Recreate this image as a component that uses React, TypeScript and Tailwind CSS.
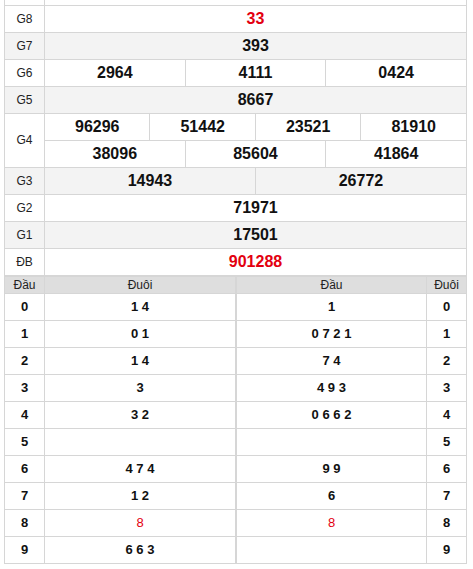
import React from "react";

const RED = "text-[#e3000f]";

type Prize = {
  label: string;
  rows: string[][];
  gray?: boolean;
  red?: boolean;
};

const prizes: Prize[] = [
  { label: "G8", rows: [["33"]], red: true },
  { label: "G7", rows: [["393"]], gray: true },
  { label: "G6", rows: [["2964", "4111", "0424"]] },
  { label: "G5", rows: [["8667"]], gray: true },
  { label: "G4", rows: [["96296", "51442", "23521", "81910"], ["38096", "85604", "41864"]] },
  { label: "G3", rows: [["14943", "26772"]], gray: true },
  { label: "G2", rows: [["71971"]] },
  { label: "G1", rows: [["17501"]], gray: true },
  { label: "ĐB", rows: [["901288"]], red: true },
];

const dau = ["1 4", "0 1", "1 4", "3", "3 2", "", "4 7 4", "1 2", "8", "6 6 3"];
const duoi = ["1", "0 7 2 1", "7 4", "4 9 3", "0 6 6 2", "", "9 9", "6", "8", ""];

const cell = "border border-[#d6d6d6] text-center p-0";

function Loto({ side }: { side: "left" | "right" }) {
  const values = side === "left" ? dau : duoi;
  const numCell = `${cell} w-[40px] h-[27px] text-[13px] font-bold text-[#111]`;
  return (
    <table className={`border-collapse table-fixed ${side === "left" ? "w-[232px]" : "w-[231px]"}`}>
      <thead>
        <tr className="bg-[#dedede] h-[17px] text-[12px] leading-[14px] text-[#222]">
          {side === "left" ? (
            <>
              <th className={`${cell} w-[40px] font-normal`}>Đầu</th>
              <th className={`${cell} font-normal`}>Đuôi</th>
            </>
          ) : (
            <>
              <th className={`${cell} font-normal`}>Đầu</th>
              <th className={`${cell} w-[40px] font-normal`}>Đuôi</th>
            </>
          )}
        </tr>
      </thead>
      <tbody>
        {values.map((v, i) => {
          const val = (
            <td className={`${cell} h-[27px] text-[13px] ${v === "8" ? `${RED} font-normal` : "font-bold text-[#111]"}`}>
              {v}
            </td>
          );
          return (
            <tr key={i} className="bg-white">
              {side === "left" ? (
                <>
                  <td className={numCell}>{i}</td>
                  {val}
                </>
              ) : (
                <>
                  {val}
                  <td className={numCell}>{i}</td>
                </>
              )}
            </tr>
          );
        })}
      </tbody>
    </table>
  );
}

export default function App() {
  return (
    <div className="w-[473px] h-[569px] overflow-hidden bg-white pl-[4px] font-['Liberation_Sans',Arial,sans-serif]">
      <table className="w-[463px] border-collapse table-fixed">
        <colgroup>
          <col className="w-[40px]" />
          {Array.from({ length: 12 }).map((_, i) => (
            <col key={i} />
          ))}
        </colgroup>
        <tbody>
          <tr className="h-[5px]">
            <td className={`${cell} border-t-0`} />
            <td className={`${cell} border-t-0`} colSpan={12} />
          </tr>
          {prizes.map((p) =>
            p.rows.map((nums, ri) => (
              <tr key={p.label + ri} className={`h-[27px] ${p.gray ? "bg-[#f3f3f3]" : "bg-white"}`}>
                {ri === 0 && (
                  <td rowSpan={p.rows.length} className={`${cell} text-[12px] text-[#222]`}>
                    {p.label}
                  </td>
                )}
                {nums.map((n, ni) => (
                  <td
                    key={ni}
                    colSpan={12 / nums.length}
                    className={`${cell} text-[16px] font-bold ${p.red ? RED : "text-[#111]"}`}
                  >
                    {n}
                  </td>
                ))}
              </tr>
            ))
          )}
        </tbody>
      </table>
      <div className="flex">
        <Loto side="left" />
        <Loto side="right" />
      </div>
    </div>
  );
}
